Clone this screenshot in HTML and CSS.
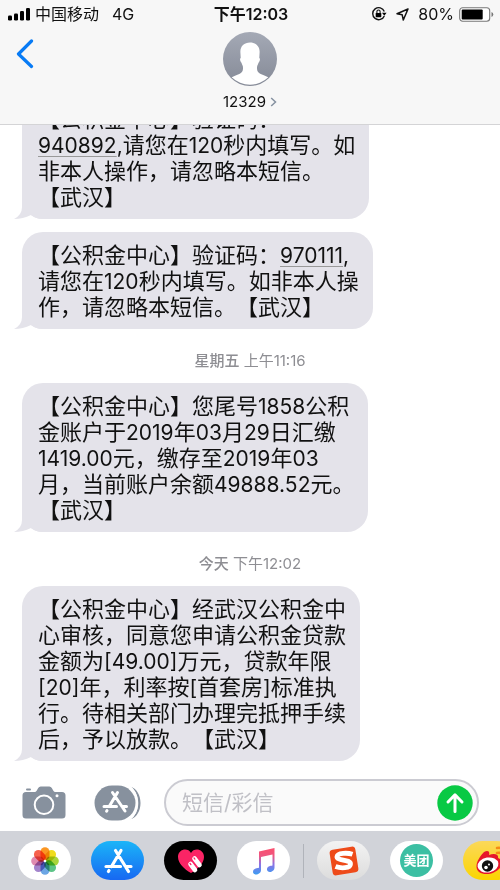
FILE: index.html
```html
<!DOCTYPE html>
<html lang="zh-CN">
<head>
<meta charset="utf-8">
<meta name="viewport" content="width=device-width, initial-scale=1">
<title>12329</title>
<link rel="stylesheet" href="styles.css">
</head>
<body>
<header class="top">
  <div class="status">
    <div class="status-left">
      <svg class="signal" viewBox="0 0 22 14" width="22" height="14" aria-hidden="true"><rect x="0" y="8.500" width="4" height="5" rx="1.300"/><rect x="6" y="6.500" width="4" height="7" rx="1.300"/><rect x="12" y="4" width="4" height="9.500" rx="1.300"/><rect x="18" y="1" width="4" height="12.500" rx="1.300"/></svg>
      <span class="carrier">中国移动</span>
      <span>4G</span>
    </div>
    <div class="clock">下午12:03</div>
    <div class="status-right">
      <svg width="16" height="16" viewBox="0 0 16 16" aria-hidden="true"><path d="M13.300 5.400A6 6 0 1 0 13.300 9.900" fill="none" stroke="#111" stroke-width="1.400"/><path d="M11 6.800h4.600l-2.300 3z"/><rect x="4.700" y="7" width="5.600" height="4.200" rx=".6"/><path d="M5.900 7V5.600a1.600 1.600 0 0 1 3.200 0V7" fill="none" stroke="#111" stroke-width="1.100"/></svg>
      <svg class="locate" width="13" height="13" viewBox="0 0 13 13" aria-hidden="true"><path d="M12 1 1 5.800 6.200 6.800 7.300 12z" fill="none" stroke="#111" stroke-width="1.500" stroke-linejoin="round"/></svg>
      <span>80%</span>
      <svg width="35" height="15" viewBox="0 0 35 15" aria-hidden="true"><rect x=".7" y=".7" width="30" height="13.600" rx="3" fill="#fff" stroke="#777" stroke-width="1.100"/><rect x="2.700" y="2.600" width="21" height="9.800" rx="1"/><path d="M32.500 5v5q1.800-.8 1.800-2.500T32.500 5" fill="#777"/></svg>
    </div>
  </div>
  <div class="nav">
    <button class="back" aria-label="返回"><svg width="18" height="30" viewBox="0 0 18 30"><path d="M15.500 2 2.500 15l13 12.500" fill="none" stroke="#087bf5" stroke-width="3.200" stroke-linecap="round" stroke-linejoin="round"/></svg></button>
    <button class="contact">
      <svg width="54" height="54" viewBox="0 0 54 54" aria-hidden="true">
        <defs><linearGradient id="av" x1="0" y1="0" x2="0" y2="1"><stop offset="0" stop-color="#a4a9b5"/><stop offset="1" stop-color="#858a97"/></linearGradient><clipPath id="avc"><circle cx="27" cy="27" r="25.800"/></clipPath></defs>
        <circle cx="27" cy="27" r="27" fill="url(#av)"/>
        <path clip-path="url(#avc)" d="M27 10.500c6 0 10 4 9.600 10l-.3 5.500c1.200.3.600 3-.6 4.500-.7 1.500-1 2.500-1.500 3.500-.7 4 .3 6.500 3.500 8 3.500 1.500 6.500 2 8.800 4.500V56h-39v-9.500c2.300-2.500 5.300-3 8.800-4.500 3.200-1.500 4.200-4 3.500-8-.5-1-.8-2-1.500-3.500-1.200-1.500-1.800-4.200-.6-4.500l-.3-5.500c-.4-6 3.600-10 9.600-10z" fill="#fff"/>
      </svg>
      <span class="name">12329 <svg width="7" height="10" viewBox="0 0 7 10" aria-hidden="true"><path d="M1.200 1 5.500 5 1.200 9" fill="none" stroke="#8591a0" stroke-width="1.500"/></svg></span>
    </button>
  </div>
</header>

<main class="thread">
  <p class="bubble">【公积金中心】验证码：<br><span class="num code">940892</span><span class="num">,</span>请您在<span class="num">120</span>秒内填写。如<br>非本人操作，请忽略本短信。<br>【武汉】</p>
  <p class="bubble next">【公积金中心】验证码：<span class="num code">970111</span><span class="num">,</span><br>请您在<span class="num">120</span>秒内填写。如非本人操<br>作，请忽略本短信。【武汉】</p>
  <time class="stamp"><b>星期五</b> 上午11:16</time>
  <p class="bubble">【公积金中心】您尾号<span class="num">1858</span>公积<br>金账户于<span class="num">2019</span>年<span class="num">03</span>月<span class="num">29</span>日汇缴<br><span class="num">1419.00</span>元，缴存至<span class="num">2019</span>年<span class="num">03</span><br>月，当前账户余额<span class="num">49888.52</span>元。<br>【武汉】</p>
  <time class="stamp"><b>今天</b> 下午12:02</time>
  <p class="bubble">【公积金中心】经武汉公积金中<br>心审核，同意您申请公积金贷款<br>金额为<span class="num">[49.00]</span>万元，贷款年限<br><span class="num">[20]</span>年，利率按<span class="num">[</span>首套房<span class="num">]</span>标准执<br>行。待相关部门办理完抵押手续<br>后，予以放款。【武汉】</p>
</main>

<form class="composer">
  <button type="button" class="tool" aria-label="相机"><svg width="44" height="33" viewBox="0 0 44 33"><path d="M4 6h8.500q1.500 0 2.300-1.500l1.400-2.500q.8-1.500 2.500-1.500h8.600q1.700 0 2.500 1.500l1.400 2.500Q32 6 33.500 6H40q3.500 0 3.500 3.500v19.500q0 3.500-3.500 3.500H4Q.5 32.500.5 29V9.500Q.5 6 4 6z" fill="#87919e"/><rect x="4" y="2.600" width="5" height="2" rx="1" fill="#87919e"/><circle cx="22" cy="18.800" r="9.300" fill="none" stroke="#fff" stroke-width="2"/><circle cx="35" cy="9.800" r="1.500" fill="#fff"/></svg></button>
  <button type="button" class="tool apps-tool" aria-label="应用"><svg width="47" height="36" viewBox="0 0 47 36"><path d="M36 1.500C50 5 50 31 36 34.500 47 27 47 9 36 1.500z" fill="#87919e"/><rect x=".5" y=".5" width="41" height="35" rx="17.500" fill="#87919e"/><path d="M35 1C46 8 46 28 35 35" fill="none" stroke="#fff" stroke-width="1.500"/><g fill="none" stroke="#fff" stroke-width="3" stroke-linecap="round"><path d="M18.500 7.500 31 26M23.500 7.500 15.500 21M13 25.500l-.4.700M10 21.500h12.500M28 21.500h4.500"/></g></svg></button>
  <div class="field">
    <input type="text" placeholder="短信/彩信" aria-label="短信/彩信">
    <button type="button" class="send" aria-label="发送"><svg width="36" height="36" viewBox="0 0 36 36"><circle cx="18" cy="18" r="17.700" fill="#08c944"/><path d="M18 26.500V10M11 17l7-7.200 7 7.200" fill="none" stroke="#fff" stroke-width="3" stroke-linecap="round" stroke-linejoin="round"/></svg></button>
  </div>
</form>

<nav class="apps" aria-label="应用">
  <button class="app" aria-label="照片"><svg width="30" height="30" viewBox="-15 -15 30 30"><g class="petals"><rect x="-4.500" y="-13.800" width="9" height="13" rx="4.500" fill="#fb9622"/><rect x="-4.500" y="-13.800" width="9" height="13" rx="4.500" fill="#f0dc1c" transform="rotate(45)"/><rect x="-4.500" y="-13.800" width="9" height="13" rx="4.500" fill="#a8d53a" transform="rotate(90)"/><rect x="-4.500" y="-13.800" width="9" height="13" rx="4.500" fill="#5cc487" transform="rotate(135)"/><rect x="-4.500" y="-13.800" width="9" height="13" rx="4.500" fill="#6ca6e4" transform="rotate(180)"/><rect x="-4.500" y="-13.800" width="9" height="13" rx="4.500" fill="#a384cc" transform="rotate(225)"/><rect x="-4.500" y="-13.800" width="9" height="13" rx="4.500" fill="#e08bb0" transform="rotate(270)"/><rect x="-4.500" y="-13.800" width="9" height="13" rx="4.500" fill="#f6604c" transform="rotate(315)"/></g><circle r="1.300" fill="#fff"/></svg></button>
  <button class="app store" aria-label="App Store"><svg width="30" height="28" viewBox="0 0 30 28"><g fill="none" stroke="#fff" stroke-width="3.200" stroke-linecap="round"><path d="M12.500 3.500 25.500 24.500M18 3.500 8.500 19.500M6 23.500l-.6 1M3 19.500h14.500M22.500 19.500H28"/></g></svg></button>
  <button class="app touch" aria-label="Digital Touch"><svg width="28" height="26" viewBox="0 0 28 26"><path d="M14 25C7 21 1 15 1 9 1 1 11-1 14 5 17-1 27 1 27 9 27 15 21 21 14 25z" fill="#fb2465"/><path d="m17.500 10.500 5 6.500M13.500 16l4.500 6" stroke="#fff" stroke-width="4.600" stroke-linecap="round"/><path d="m17 9.900.9 1.200M13 15.400l.9 1.200" stroke="#fb2465" stroke-width="1.300" stroke-linecap="round"/></svg></button>
  <button class="app" aria-label="音乐"><svg width="24" height="28" viewBox="0 0 24 28"><defs><linearGradient id="mu" x1="0" y1="0" x2="0" y2="1"><stop offset="0" stop-color="#fb4f6e"/><stop offset=".3" stop-color="#ef5680"/><stop offset=".62" stop-color="#8b72e5"/><stop offset="1" stop-color="#3c9df2"/></linearGradient></defs><path d="M7 4.500 22.500 1v19.500c0 5-7.500 6-7.500 2 0-3.500 3.500-3.500 5.500-4V7.500L9 10v13c0 5-8 6-8 2s4-3.500 6-4.300z" fill="url(#mu)"/></svg></button>
  <span class="divider"></span>
  <button class="app sogou" aria-label="搜狗"><svg width="32" height="32" viewBox="0 0 32 32"><rect x="3" y="3" width="26" height="26" rx="3.500" fill="#ee4b19" transform="rotate(-9 16 16)"/><path d="M24.500 9.300c-5-1.700-15-1.500-15.500 2.200-.7 4.500 13.500 2.500 13.500 7.500 0 4.500-10 4.500-15 2.500" fill="none" stroke="#fff" stroke-width="4.800"/></svg></button>
  <button class="app meituan"><span>美团</span></button>
  <button class="app weibo" aria-label="微博"><svg width="42" height="38" viewBox="0 0 42 38"><path d="M15 10c4-2 6-.5 5 3 5-2 10-1 9 3 6 2 5 7 2 10-5 6-15 8-21 4-6-5 0-15 5-20z" fill="#e6172b"/><ellipse cx="19" cy="23" rx="10.500" ry="7.500" fill="#fff" transform="rotate(-9 19 23)"/><circle cx="18.500" cy="24" r="5.700" fill="#111"/><circle cx="17" cy="25.500" r="1.800" fill="#fff"/><circle cx="20" cy="22.500" r="1" fill="#fff"/><path d="M28 6c8-1 12 4 10 11M28 11c5-1 7 2 6 6" fill="none" stroke="#f58b16" stroke-width="2.500" stroke-linecap="round"/></svg></button>
</nav>
</body>
</html>
```

FILE: styles.css
```css
* { box-sizing: border-box; }

body {
  margin: 0;
  height: 100vh;
  display: flex;
  flex-direction: column;
  overflow: hidden;
  background: #fff;
  color: #111;
  font-family: Inter, "Noto Sans CJK SC", sans-serif;
  text-spacing-trim: space-all;
}

button {
  border: 0;
  padding: 0;
  background: none;
  color: inherit;
  font: inherit;
}

svg { display: block; flex: none; }

.top {
  flex: none;
  background: #f7f7f7;
  border-bottom: 1px solid #d4d4d6;
}

.status {
  display: grid;
  grid-template-columns: 1fr auto 1fr;
  align-items: center;
  height: 28px;
  padding: 0 6px 0 8px;
  font-size: 16px;
  line-height: 24px;
}
.status-left, .status-right { display: flex; align-items: center; }
.status-left { gap: 5px; }
.carrier { margin-right: 8px; }
.status-right { justify-content: flex-end; gap: 5px; }
.locate { margin: 0 4px; }
.clock { font-weight: 600; }

.nav {
  display: grid;
  grid-template-columns: 1fr auto 1fr;
  align-items: start;
  padding: 4px 16px 12px;
}
.back { justify-self: start; margin-top: 7px; }
.contact {
  display: flex;
  flex-direction: column;
  align-items: center;
  gap: 6px;
}
.name {
  display: flex;
  align-items: center;
  gap: 4px;
  font-size: 15px;
  line-height: 20px;
}

.thread {
  flex: 1;
  min-height: 0;
  overflow: hidden;
  display: flex;
  flex-direction: column;
  justify-content: flex-end;
  align-items: flex-start;
  padding: 0 22px 18px;
}

.bubble {
  position: relative;
  isolation: isolate;
  flex: none;
  margin: 0;
  padding: 10px 14px 9px 16px;
  border-radius: 21px;
  background: #e4e3ea;
  font-size: 22px;
  line-height: 26px;
  white-space: nowrap;
}
.bubble::before {
  content: "";
  position: absolute;
  z-index: -1;
  left: -8px;
  bottom: 0;
  width: 30px;
  height: 22px;
  background: #e4e3ea;
  clip-path: path("M8 0 V10 Q8 18 0 22 Q9 22 17 18 Q22 22 30 22 V0 Z");
}
.next { margin-top: 13px; }

.num { font-size: 21px; line-height: 1; }
.code {
  text-decoration: underline;
  text-decoration-color: #999;
  text-decoration-thickness: 1px;
  text-underline-offset: 3px;
}

.stamp {
  flex: none;
  align-self: center;
  padding: 22px 0 12px;
  color: #8e8e93;
  font-size: 15px;
  line-height: 20px;
}
.stamp b { font-weight: 500; }

.composer {
  flex: none;
  display: flex;
  align-items: center;
  padding: 0 21px 5px 22px;
}
.tool { flex: none; }
.apps-tool { margin: 0 23px 0 28px; }
.field {
  flex: 1;
  min-width: 0;
  display: flex;
  align-items: center;
  height: 47px;
  padding: 0 4px 0 16px;
  border: 2px solid #cbcbd2;
  border-radius: 24px;
  background: #fafafa;
}
.field input {
  flex: 1;
  min-width: 0;
  border: 0;
  padding: 0;
  outline: 0;
  background: none;
  color: #111;
  font: 21px/30px Inter, "Noto Sans CJK SC", sans-serif;
}
.field input::placeholder { color: #c0c0c6; opacity: 1; }

.apps {
  flex: none;
  display: flex;
  align-items: center;
  gap: 20px;
  padding: 10px 0 10px 18px;
  overflow: hidden;
  background: #d1d3d9;
}
.app {
  flex: none;
  display: flex;
  align-items: center;
  justify-content: center;
  width: 53px;
  height: 39px;
  border-radius: 20px;
  background: #fff;
  overflow: hidden;
}
.petals rect { mix-blend-mode: multiply; }
.store { background: linear-gradient(#1bb5f8, #1768f2); }
.touch { background: #000; }
.sogou { background: linear-gradient(#f3f3f3, #dcdcdc); }
.weibo { background: linear-gradient(#fbd85a, #fbd500); }
.meituan span {
  width: 33px;
  height: 33px;
  border-radius: 50%;
  background: #3cbfa3;
  color: #fff;
  font-size: 13px;
  font-weight: 700;
  line-height: 33px;
}
.divider {
  flex: none;
  width: 1px;
  height: 34px;
  margin: 0 -7px;
  background: #b0b3ba;
}
```
